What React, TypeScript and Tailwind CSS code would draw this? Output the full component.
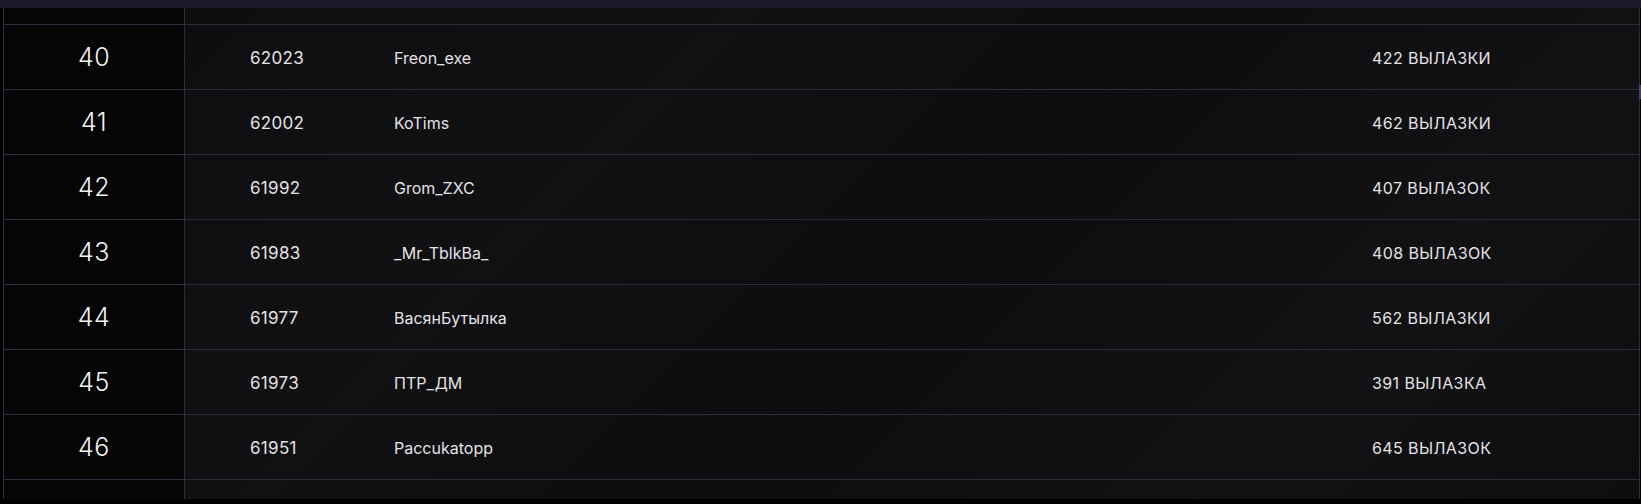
const rows = [
  { rank: 40, id: '62023', name: 'Freon_exe', raids: '422 ВЫЛАЗКИ' },
  { rank: 41, id: '62002', name: 'KoTims', raids: '462 ВЫЛАЗКИ' },
  { rank: 42, id: '61992', name: 'Grom_ZXC', raids: '407 ВЫЛАЗОК' },
  { rank: 43, id: '61983', name: '_Mr_TblkBa_', raids: '408 ВЫЛАЗОК' },
  { rank: 44, id: '61977', name: 'ВасянБутылка', raids: '562 ВЫЛАЗКИ' },
  { rank: 45, id: '61973', name: 'ПТР_ДМ', raids: '391 ВЫЛАЗКА' },
  { rank: 46, id: '61951', name: 'Paccukatopp', raids: '645 ВЫЛАЗОК' },
]

export default function App() {
  return (
    <div className="w-[1641px] h-[504px] overflow-hidden bg-black font-['Inter','Liberation_Sans',sans-serif] text-[#e4e2e6]">
      {/* top strip */}
      <div className="h-[8px] bg-[#1d1827]" />

      <div className="relative ml-[3px] w-[1637px] border-x border-[#33293f] bg-[#0e0d10] bg-[linear-gradient(135deg,#0d0c0f_0%,#111013_35%,#0d0c0f_55%,#121114_80%,#0e0d10_100%)]">
        {/* header */}
        <div className="flex h-[17px] border-b border-[#33293f]">
          <div className="w-[181px] border-r border-[#33293f] bg-[#050505]" />
          <div className="flex-1" />
        </div>

        {rows.map((r) => (
          <div key={r.rank} className="flex h-[65px] border-b border-[#33293f]">
            <div className="flex w-[181px] items-center justify-center border-r border-[#33293f] bg-[#050505] pt-[2px] text-[25px] font-light tracking-[0.5px] text-[#f2f2f2]">
              {r.rank}
            </div>
            <div className="flex w-[209px] items-center pl-[65px] pt-[3px] text-[17px] tracking-[0.3px]">
              {r.id}
            </div>
            <div className="flex flex-1 items-center pt-[2px] text-[16px]">{r.name}</div>
            <div className="flex w-[267px] items-center pt-[2px] text-[16px] tracking-[0.4px]">{r.raids}</div>
          </div>
        ))}

        {/* cut-off row */}
        <div className="flex h-[19px]">
          <div className="w-[181px] border-r border-[#33293f] bg-[#050505]" />
          <div className="flex-1" />
        </div>

        {/* scrollbar thumb */}
        <div className="absolute right-[-2px] top-[77px] h-[14px] w-[2px] bg-[#4b3a66]" />
      </div>
    </div>
  )
}
